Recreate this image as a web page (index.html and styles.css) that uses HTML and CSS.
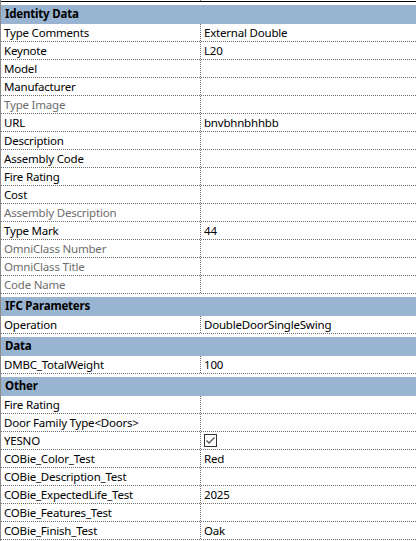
FILE: index.html
```html
<!DOCTYPE html>
<html>
<head>
<meta charset="utf-8">
<link rel="stylesheet" href="styles.css">
</head>
<body>
<div class="palette">
  <div class="topstrip"><div class="tk"></div></div>

  <section class="group">
    <div class="ghead">Identity Data</div>
    <div class="row"><div class="k">Type Comments</div><div class="v">External Double</div></div>
    <div class="row"><div class="k">Keynote</div><div class="v">L20</div></div>
    <div class="row"><div class="k">Model</div><div class="v"></div></div>
    <div class="row"><div class="k">Manufacturer</div><div class="v"></div></div>
    <div class="row"><div class="k dim">Type Image</div><div class="v"></div></div>
    <div class="row"><div class="k">URL</div><div class="v">bnvbhnbhhbb</div></div>
    <div class="row"><div class="k">Description</div><div class="v"></div></div>
    <div class="row"><div class="k">Assembly Code</div><div class="v"></div></div>
    <div class="row"><div class="k">Fire Rating</div><div class="v"></div></div>
    <div class="row"><div class="k">Cost</div><div class="v"></div></div>
    <div class="row"><div class="k dim">Assembly Description</div><div class="v"></div></div>
    <div class="row"><div class="k">Type Mark</div><div class="v">44</div></div>
    <div class="row"><div class="k dim">OmniClass Number</div><div class="v"></div></div>
    <div class="row"><div class="k dim">OmniClass Title</div><div class="v"></div></div>
    <div class="row"><div class="k dim">Code Name</div><div class="v"></div></div>
  </section>

  <section class="group">
    <div class="ghead">IFC Parameters</div>
    <div class="row"><div class="k">Operation</div><div class="v">DoubleDoorSingleSwing</div></div>
  </section>

  <section class="group">
    <div class="ghead">Data</div>
    <div class="row"><div class="k">DMBC_TotalWeight</div><div class="v">100</div></div>
  </section>

  <section class="group">
    <div class="ghead">Other</div>
    <div class="row"><div class="k">Fire Rating</div><div class="v"></div></div>
    <div class="row"><div class="k">Door Family Type&lt;Doors&gt;</div><div class="v"></div></div>
    <div class="row"><div class="k">YESNO</div><div class="v"><span class="check"><svg width="11" height="11" viewBox="0 0 11 11"><path d="M1.5 5.5 L4 8 L9.5 2.5" fill="none" stroke="#555" stroke-width="1.3"/></svg></span></div></div>
    <div class="row"><div class="k">COBie_Color_Test</div><div class="v">Red</div></div>
    <div class="row"><div class="k">COBie_Description_Test</div><div class="v"></div></div>
    <div class="row"><div class="k">COBie_ExpectedLife_Test</div><div class="v">2025</div></div>
    <div class="row"><div class="k">COBie_Features_Test</div><div class="v"></div></div>
    <div class="row"><div class="k">COBie_Finish_Test</div><div class="v">Oak</div></div>
  </section>
</div>
</body>
</html>
```

FILE: styles.css
```css
html, body {
  margin: 0;
  padding: 0;
  background: #fff;
}
.palette {
  width: 416px;
  height: 541px;
  box-sizing: border-box;
  border-left: 1px solid #8a8a8a;
  font-family: "Noto Sans", sans-serif;
  font-size: 11.5px;
  letter-spacing: -0.2px;
  color: #000;
  overflow: hidden;
}
.topstrip {
  height: 1px;
  border-bottom: 1px solid #000;
}
.tk {
  width: 199px;
  height: 1px;
  border-right: 1px solid #7a7a7a;
}
.group {
  margin-top: 3px;
}
.ghead {
  height: 19px;
  line-height: 17px;
  background: #99b4d1;
  font-weight: bold;
  padding-left: 4px;
}
.row {
  display: grid;
  grid-template-columns: 200px 1fr;
  height: 18px;
  box-sizing: border-box;
  border-bottom: 1px dotted #6e6e6e;
  line-height: 17px;
}
.k {
  padding-left: 3px;
  border-right: 1px dotted #6e6e6e;
  white-space: nowrap;
  overflow: hidden;
}
.k.dim {
  color: #6d6d6d;
}
.v {
  padding-left: 3px;
  white-space: nowrap;
  overflow: hidden;
}
.check {
  display: inline-block;
  width: 11px;
  height: 11px;
  border: 1px solid #333;
  margin-top: 2px;
  vertical-align: top;
}
.check svg {
  display: block;
}
```
